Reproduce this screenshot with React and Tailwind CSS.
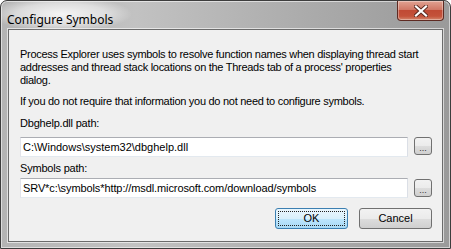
export default function App() {
  const ui = { fontFamily: '"Liberation Sans", Arial, sans-serif' };
  return (
    <div className="w-[451px] h-[249px] bg-white">
      <div className="w-[451px] h-[249px] flex flex-col rounded-t-[7px] border border-[#3d3d3d] bg-[linear-gradient(90deg,#b4b4b4_0%,#c2c2c2_30%,#aaaaaa_70%,#9a9a9a_100%)] overflow-hidden shadow-[inset_0_0_0_1px_rgba(255,255,255,0.55)]">
        <div className="h-[28px] flex justify-between items-start">
          <div className="relative pl-[6px] pt-[5px]">
            <div className="absolute left-[-10px] top-[-4px] w-[140px] h-[34px] bg-[radial-gradient(ellipse_at_center,rgba(255,255,255,0.85)_0%,rgba(255,255,255,0.5)_45%,rgba(255,255,255,0)_72%)]" />
            <span className="relative text-[12px] leading-[16px] text-black" style={{ fontFamily: '"Noto Sans", "Open Sans", sans-serif' }}>
              Configure Symbols
            </span>
          </div>
          <div className="mr-[6px] w-[47px] h-[20px] rounded-b-[4px] border border-t-0 border-[#5e2a22] bg-[linear-gradient(180deg,#e0a292_0%,#d07866_45%,#c04a34_50%,#c4523a_80%,#d4866c_100%)] flex items-center justify-center shadow-[inset_0_0_0_1px_rgba(255,255,255,0.35)]">
            <svg width="14" height="12" viewBox="0 0 14 12">
              <path d="M2 1.5 L12 10.5 M12 1.5 L2 10.5" stroke="#5a2a20" strokeWidth="4" strokeLinecap="square" />
              <path d="M2 1.5 L12 10.5 M12 1.5 L2 10.5" stroke="#ffffff" strokeWidth="2.2" strokeLinecap="square" />
            </svg>
          </div>
        </div>
        <div className="flex-1 mx-[7px] mb-[6px] border border-[#6b6b6b] shadow-[0_0_0_1px_rgba(255,255,255,0.6)] bg-[#f0f0f0] flex flex-col pl-[11px] pr-[10px] pt-[18px] text-[11px] leading-[13px] text-black" style={ui}>
          <p className="whitespace-nowrap tracking-[-0.28px]">
            Process Explorer uses symbols to resolve function names when displaying thread start
            <br />
            addresses and thread stack locations on the Threads tab of a process' properties
            <br />
            dialog.
          </p>
          <p className="mt-[8px] whitespace-nowrap tracking-[-0.28px]">If you do not require that information you do not need to configure symbols.</p>
          <p className="mt-[9px] tracking-[-0.2px]">Dbghelp.dll path:</p>
          <div className="mt-[7px] flex items-start gap-[6px]">
            <div className="flex-1 h-[20px] bg-white border border-[#abadb3] border-l-[#e2e3ea] border-r-[#dbdfe6] border-b-[#e3e9ef] flex items-center pl-[2px]">
              C:\Windows\system32\dbghelp.dll
            </div>
            <button className="w-[18px] h-[18px] rounded-[3px] border border-[#707070] bg-[linear-gradient(180deg,#f2f2f2_0%,#ebebeb_50%,#dddddd_51%,#cfcfcf_100%)] text-[9px] leading-[10px] pt-[3px] text-[#333]">...</button>
          </div>
          <p className="mt-[5px] tracking-[-0.2px]">Symbols path:</p>
          <div className="mt-[3px] flex items-center gap-[6px]">
            <div className="flex-1 h-[20px] bg-white border border-[#abadb3] border-l-[#e2e3ea] border-r-[#dbdfe6] border-b-[#e3e9ef] flex items-center pl-[2px] whitespace-nowrap tracking-[-0.1px]">
              SRV*c:\symbols*http://msdl.microsoft.com/download/symbols
            </div>
            <button className="w-[18px] h-[18px] rounded-[3px] border border-[#707070] bg-[linear-gradient(180deg,#f2f2f2_0%,#ebebeb_50%,#dddddd_51%,#cfcfcf_100%)] text-[9px] leading-[10px] pt-[3px] text-[#333]">...</button>
          </div>
          <div className="mt-[10px] flex justify-end gap-[11px]">
            <button className="w-[73px] h-[21px] rounded-[3px] border border-[#3c7fb1] bg-[linear-gradient(180deg,#eaf6fd_0%,#d9f0fc_50%,#bee6fd_51%,#a7d9f5_100%)] p-[2px]">
              <div className="w-full h-full border border-dotted border-[#222] flex items-center justify-center">OK</div>
            </button>
            <button className="w-[73px] h-[21px] rounded-[3px] border border-[#707070] bg-[linear-gradient(180deg,#f2f2f2_0%,#ebebeb_50%,#dddddd_51%,#cfcfcf_100%)] flex items-center justify-center">
              Cancel
            </button>
          </div>
        </div>
      </div>
    </div>
  );
}
